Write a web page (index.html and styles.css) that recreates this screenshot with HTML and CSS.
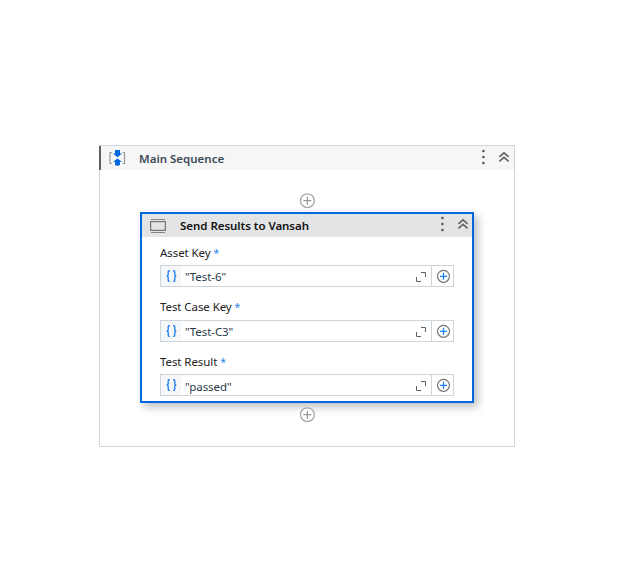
FILE: index.html
```html
<!DOCTYPE html>
<html lang="en">
<head>
<meta charset="utf-8">
<title>Main Sequence</title>
<link rel="stylesheet" href="styles.css">
</head>
<body>
<svg width="0" height="0" class="defs">
  <symbol id="dots" viewBox="0 0 4 16"><g fill="#5c5c5c"><circle cx="2.4" cy="2" r="1.35"/><circle cx="2.4" cy="8" r="1.35"/><circle cx="2.4" cy="14" r="1.35"/></g></symbol>
  <symbol id="collapse" viewBox="0 0 10 10"><path d="M.4 4.800 5 .9 9.600 4.800M.4 9.300 5 5.400 9.600 9.300" fill="none" stroke="#616161" stroke-width="1.6"/></symbol>
  <symbol id="add" viewBox="0 0 16 16"><circle cx="8.400" cy="7.700" r="6.900" fill="#fff" stroke="#a9a9a9" stroke-width="1.300"/><path d="M8.400 3.700v8M4.400 7.700h8" stroke="#999" stroke-width="1.300"/></symbol>
  <symbol id="plus" viewBox="0 0 14 14"><circle cx="7.500" cy="7.300" r="6" fill="none" stroke="#777" stroke-width="1.200"/><path d="M7.500 3.800v7M4 7.300h7" stroke="#1c80f0" stroke-width="1.300"/></symbol>
  <symbol id="expand" viewBox="0 0 10 10"><path d="M5 .5h4.500V5M.5 5v4.500H5" fill="none" stroke="#606060"/></symbol>
  <symbol id="braces" viewBox="0 0 11 12"><path d="M3.900 .7H3.200Q2.200 .7 2.200 1.900V4.500Q2.200 5.800 .8 6 2.200 6.200 2.200 7.500V10.100Q2.200 11.300 3.200 11.300H3.900M7.100 .7H7.800Q8.800 .7 8.800 1.900V4.500Q8.800 5.800 10.200 6 8.800 6.200 8.800 7.500V10.100Q8.800 11.300 7.800 11.300H7.100" fill="none" stroke="#237fee" stroke-width="1.350"/></symbol>
</svg>
<main class="sequence">
  <header class="bar">
    <svg class="seq-icon" viewBox="0 0 18 16"><path d="M4 2.500H2v11h2M14.500 2.500h2v11h-2" fill="none" stroke="#999" stroke-width="1.200"/><path d="M7 0h5v3.500h2L9.500 7.300 5 3.500h2zM9.500 8.500l4.500 3.300h-2V15q-2.500 1.500-5 0v-3.200h-2z" fill="#0067df"/></svg>
    <h1 class="title">Main Sequence</h1>
    <svg class="dots"><use href="#dots"/></svg>
    <svg class="collapse"><use href="#collapse"/></svg>
  </header>
  <div class="body">
    <svg class="add"><use href="#add"/></svg>
    <section class="card">
      <header class="card-bar">
        <svg class="act-icon" viewBox="0 0 16 14"><path d="M1 .5h14M1 13.500h14" stroke="#858585"/><rect x=".6" y="2.600" width="14.800" height="8.800" fill="none" stroke="#747474" stroke-width="1.200"/></svg>
        <h2 class="card-title">Send Results to Vansah</h2>
        <svg class="dots"><use href="#dots"/></svg>
        <svg class="collapse"><use href="#collapse"/></svg>
      </header>
      <div class="fields">
        <div class="field">
          <div class="label">Asset Key <i>*</i></div>
          <div class="input"><span class="mode"><svg><use href="#braces"/></svg></span><span class="value">"Test-6"</span><svg class="expand"><use href="#expand"/></svg><span class="more"><svg><use href="#plus"/></svg></span></div>
        </div>
        <div class="field">
          <div class="label raised">Test Case Key <i>*</i></div>
          <div class="input"><span class="mode"><svg><use href="#braces"/></svg></span><span class="value">"Test-C3"</span><svg class="expand"><use href="#expand"/></svg><span class="more"><svg><use href="#plus"/></svg></span></div>
        </div>
        <div class="field">
          <div class="label">Test Result <i>*</i></div>
          <div class="input"><span class="mode"><svg><use href="#braces"/></svg></span><span class="value low">"passed"</span><svg class="expand"><use href="#expand"/></svg><span class="more"><svg><use href="#plus"/></svg></span></div>
        </div>
      </div>
    </section>
    <svg class="add"><use href="#add"/></svg>
  </div>
</main>
</body>
</html>
```
FILE: styles.css
```css
* { box-sizing: border-box; }
body { margin: 0; padding: 145px 0 0 99px; background: #fff; font-family: "Noto Sans", "Open Sans", sans-serif; font-size: 11.5px; color: #222; }
svg { display: block; flex: none; overflow: visible; }
symbol { overflow: visible; }
.defs { display: none; }
h1, h2 { margin: 0; flex: 1; white-space: nowrap; }
.sequence { width: 416px; height: 302px; border: 1px solid #cfd8dd; }
.bar { display: flex; align-items: center; height: 24px; margin-left: -1px; padding: 0 5px 1px 7px; background: #f6f6f6; border-left: 2px solid #606060; }
.seq-icon { width: 18px; height: 16px; margin-right: 13px; }
.title { padding-top: 2px; font-size: 11.5px; line-height: 16px; font-weight: 600; color: #3c4a57; }
.dots { width: 4px; height: 16px; margin: -1px 14px 0 0; }
.collapse { width: 10px; height: 10px; margin-top: -1px; }
.body { display: flex; flex-direction: column; align-items: center; padding-top: 23px; }
.add { width: 16px; height: 16px; }
.card { width: 334px; height: 191px; margin: 3px 0 4px; border: 2px solid #0067df; background: #fff; box-shadow: 4px 4px 8px rgba(0,0,0,.25); }
.card-bar { display: flex; align-items: center; height: 23px; padding: 0 4px 2px 8px; background: #e3e4e6; }
.act-icon { width: 16px; height: 14px; margin: 2px 14px 0 0; }
.card-title { padding-top: 2px; font-size: 11.5px; line-height: 16px; font-weight: 600; letter-spacing: -.04px; color: #111; }
.fields { display: flex; flex-direction: column; gap: 16.700px; padding: 8px 18px 0; }
.field { height: 38px; }
.label { height: 16px; line-height: 16px; margin-bottom: 4px; letter-spacing: -.08px; white-space: nowrap; }
.raised { margin-top: -1px; margin-bottom: 5px; }
.label i { font-style: normal; font-size: 10.5px; color: #2b84e8; }
.input { display: flex; align-items: center; height: 22px; border: 1px solid #cbd5db; background: #fff; }
.mode { display: flex; align-items: center; justify-content: center; width: 20px; height: 20px; background: #f6f7f8; }
.mode svg { width: 11px; height: 12px; margin-left: 1px; }
.value { flex: 1; padding: 2px 0 0 4px; line-height: 16px; letter-spacing: -.08px; color: #2b3947; }
.low { padding-top: 3px; }
.expand { width: 10px; height: 10px; margin: 2px 5px 0 0; }
.more { display: flex; align-items: center; justify-content: center; width: 22px; height: 20px; border-left: 1px solid #cbd5db; }
.more svg { width: 14px; height: 14px; }
```
